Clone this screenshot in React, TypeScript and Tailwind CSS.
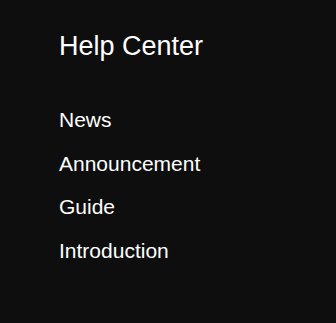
import React from 'react';

const links = ['News', 'Announcement', 'Guide', 'Introduction'];

const App = () => {
  return (
    <div className="w-[336px] h-[323px] bg-[#0e0e0e] text-white font-['Liberation_Sans',Arial,sans-serif] pl-[59px] pt-[32px]">
      <h1 className="text-[27px] leading-[29px] font-normal">Help Center</h1>
      <ul className="mt-[47px] flex flex-col gap-[19.5px]">
        {links.map((l) => (
          <li key={l} className="text-[21px] leading-[24px]">
            <a href="#">{l}</a>
          </li>
        ))}
      </ul>
    </div>
  );
};

export default App;
